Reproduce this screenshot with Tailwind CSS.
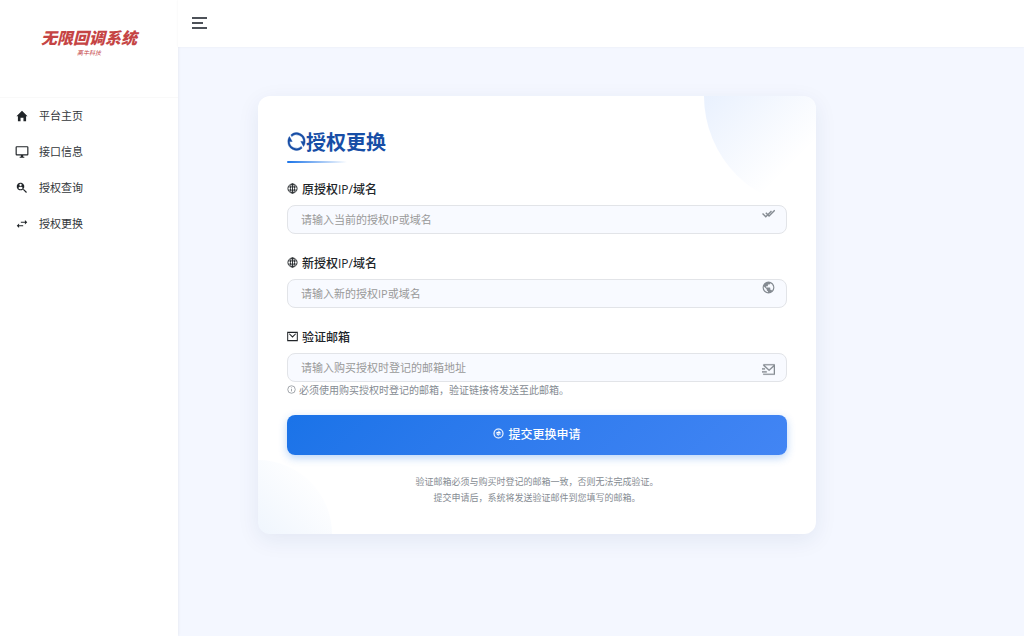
<!DOCTYPE html>
<html lang="zh-CN">
  <head>
    <meta charset="UTF-8" />
    <meta name="viewport" content="width=device-width, initial-scale=1.0" />
    <title>授权更换</title>
    <script src="https://cdn.jsdelivr.net/npm/@tailwindcss/browser@4"></script>
  </head>
  <body class="flex min-h-screen bg-[#f4f7ff] font-['Open_Sans','Noto_Sans_CJK_SC',sans-serif] text-[#212529]">
    <!-- Sidebar -->
    <aside class="w-[178px] shrink-0 bg-white shadow-[0_0_3px_rgba(0,0,0,0.08)]">
      <a href="#" class="flex h-[98px] flex-col items-center border-b border-[#f9f9f9] pt-[26px] text-[#c54444]">
        <span class="text-[16px] leading-6 font-black italic">无限回调系统</span>
        <span class="text-[6px] leading-[7px] italic">高牛科技</span>
      </a>
      <nav class="text-[11px] text-[#33373b]">
        <a href="#" class="flex h-9 items-center gap-[10px] pl-[15px]">
          <svg class="size-[14px]" viewBox="0 0 24 24" fill="#212529"><path d="M9.500 21v-6h5v6H19v-8.500h2.500L12 3l-9.500 9.500H5V21z" /></svg>
          <span>平台主页</span>
        </a>
        <a href="#" class="flex h-9 items-center gap-[10px] pl-[15px]">
          <svg class="size-[14px]" viewBox="0 0 24 24" fill="#212529"><path d="M21 2H3a2 2 0 0 0-2 2v12a2 2 0 0 0 2 2h7v2H8v2h8v-2h-2v-2h7a2 2 0 0 0 2-2V4a2 2 0 0 0-2-2zm0 14H3V4h18v12z" /></svg>
          <span>接口信息</span>
        </a>
        <a href="#" class="flex h-9 items-center gap-[10px] pl-[15px]">
          <svg class="size-[14px]" viewBox="0 0 24 24" fill="#212529"><path d="M15.500 14l5 5-1.500 1.500-5-5v-.8l-.3-.3A6.500 6.500 0 1 1 14.400 13.700l.3.3h.8zM9.500 4.500a2 2 0 1 0 0 4 2 2 0 0 0 0-4zm0 5.500c-1.600 0-3 .8-3.800 2a4.600 4.600 0 0 0 7.600 0c-.8-1.200-2.200-2-3.800-2z" /></svg>
          <span>授权查询</span>
        </a>
        <a href="#" class="flex h-9 items-center gap-[10px] pl-[15px]">
          <svg class="size-[14px]" viewBox="0 0 24 24" fill="#212529"><path d="M21 9l-4-4v3h-7v2h7v3l4-4zM7 11l-4 4 4 4v-3h7v-2H7v-3z" /></svg>
          <span>授权更换</span>
        </a>
      </nav>
    </aside>

    <div class="min-w-0 flex-1">
      <!-- Top bar -->
      <header class="flex h-[47px] items-center bg-white pl-[14px] shadow-[0_0_2px_rgba(0,0,0,0.06)]">
        <button type="button" aria-label="菜单" class="mb-px flex flex-col gap-[3px]">
          <span class="h-[2px] w-[15px] bg-[#4d5259]"></span>
          <span class="h-[2px] w-[11px] bg-[#4d5259]"></span>
          <span class="h-[2px] w-[15px] bg-[#4d5259]"></span>
        </button>
      </header>

      <main class="px-20 pt-[49px] pb-20">
        <!-- Card -->
        <section class="relative w-full max-w-[558px] rounded-xl bg-white shadow-[0_6px_22px_rgba(30,50,100,0.08)]">
          <div class="pointer-events-none absolute inset-0 overflow-hidden rounded-xl">
            <div class="absolute -top-28 -right-28 size-56 rounded-full bg-linear-135 from-[#4285f4]/20 from-0% to-[#4285f4]/0 to-60%"></div>
            <div class="absolute -bottom-[74px] -left-[74px] size-[148px] rounded-full bg-linear-45 from-[#1a73e8]/15 to-[#1a73e8]/0 to-90%"></div>
          </div>

          <form class="relative px-[29px] pt-8 pb-7">
            <h1 class="flex items-center text-[20px] leading-[30px] font-bold text-[#174ea6]">
              <svg class="mb-1 size-[19px]" viewBox="1 1 22 22" fill="currentColor" stroke="currentColor" stroke-width="0.500"><path d="M5.460 4.260A10 10 0 0 1 22 12c0 2.140-.67 4.120-1.810 5.740L17 12h3A8 8 0 0 0 6.460 6.230zM18.540 19.740A10 10 0 0 1 2 12c0-2.140.67-4.120 1.810-5.740L7 12H4a8 8 0 0 0 13.540 5.770z" /></svg>
              授权更换
            </h1>
            <div class="mt-[3px] h-[2px] w-[60px] rounded-full bg-linear-to-r from-[#1a73e8] to-[#1a73e8]/0"></div>

            <div class="mt-[17px]">
              <label for="oldHost" class="flex items-center gap-1 text-[12px] leading-5 font-medium">
                <svg class="mb-[3px] size-[11px]" viewBox="0 0 24 24" fill="none" stroke="currentColor" stroke-width="2"><circle cx="12" cy="12" r="10" /><ellipse cx="12" cy="12" rx="4.500" ry="10" /><path d="M3 8.500h18M3 15.500h18M12 2v20" /></svg>
                原授权IP/域名
              </label>
              <div class="relative mt-[5px]">
                <input id="oldHost" type="text" placeholder="请输入当前的授权IP或域名" class="block h-[29px] w-full rounded-lg border border-[#e2e4e8] bg-[#f8faff] pr-10 pl-[13px] text-[11px] placeholder:text-[#999]" />
                <svg class="absolute top-[2px] right-3 size-[13px] text-[#858b92]" viewBox="0 0 24 24" fill="none" stroke="currentColor" stroke-width="2.500"><path d="M1 12l6 6L17.500 7.500M7 10.500l6 6L23.500 6" /></svg>
              </div>
            </div>

            <div class="mt-5">
              <label for="newHost" class="flex items-center gap-1 text-[12px] leading-5 font-medium">
                <svg class="mb-[3px] size-[11px]" viewBox="0 0 24 24" fill="none" stroke="currentColor" stroke-width="2"><circle cx="12" cy="12" r="10" /><ellipse cx="12" cy="12" rx="4.500" ry="10" /><path d="M3 8.500h18M3 15.500h18M12 2v20" /></svg>
                新授权IP/域名
              </label>
              <div class="relative mt-[5px]">
                <input id="newHost" type="text" placeholder="请输入新的授权IP或域名" class="block h-[29px] w-full rounded-lg border border-[#e2e4e8] bg-[#f8faff] pr-10 pl-[13px] text-[11px] placeholder:text-[#999]" />
                <svg class="absolute top-[2px] right-3 size-[13px] text-[#858b92]" viewBox="1 1 22 22" fill="currentColor"><path d="M12 2a10 10 0 1 0 0 20 10 10 0 0 0 0-20zm-1 17.900A8 8 0 0 1 4.200 10.200L9 15v1a2 2 0 0 0 2 2v1.900zm6.900-2.500a2 2 0 0 0-1.900-1.400h-1v-3a1 1 0 0 0-1-1H8v-2h2a1 1 0 0 0 1-1V7h2a2 2 0 0 0 2-2v-.4a8 8 0 0 1 2.900 12.800z" /></svg>
              </div>
            </div>

            <div class="mt-5">
              <label for="email" class="flex items-center gap-1 text-[12px] leading-5 font-medium">
                <svg class="mb-[3px] size-[11px]" viewBox="0 0 24 24" fill="none" stroke="currentColor" stroke-width="2.200"><path d="M1.500 3h21v18h-21zM5 6l7 7 7-7" /></svg>
                验证邮箱
              </label>
              <div class="relative mt-[5px]">
                <input id="email" type="email" placeholder="请输入购买授权时登记的邮箱地址" class="block h-[29px] w-full rounded-lg border border-[#e2e4e8] bg-[#f8faff] pr-10 pl-[13px] text-[11px] placeholder:text-[#999]" />
                <svg class="absolute top-[10px] right-3 size-[13px] text-[#858b92]" viewBox="0 1 22 22" fill="currentColor" stroke="currentColor" stroke-width="0.300"><path d="M22 20a1 1 0 0 1-1 1H3a1 1 0 0 1-1-1v-1h18V7.300l-8 7.200-10-9V4a1 1 0 0 1 1-1h18a1 1 0 0 1 1 1zM4.430 5L12 11.810 19.570 5zM0 15h8v2H0zM0 10h5v2H0z" /></svg>
              </div>
              <p class="flex items-center gap-[3px] text-[10px] leading-4 text-[#858b92]">
                <svg class="mb-[2px] size-[9px] shrink-0" viewBox="0 0 24 24" fill="none" stroke="currentColor" stroke-width="2"><circle cx="12" cy="12" r="10" /><path d="M12 10.500V17M12 6.500v2" /></svg>
                必须使用购买授权时登记的邮箱，验证链接将发送至此邮箱。
              </p>
            </div>

            <button type="submit" class="mt-[17px] flex h-10 w-full items-center justify-center gap-1 rounded-lg bg-linear-135 from-[#1a73e8] to-[#4285f4] text-[12px] font-medium text-white shadow-[0_3px_9px_rgba(26,115,232,0.3)]">
              <svg class="mb-[3px] size-[11px]" viewBox="1 1 22 22" fill="currentColor" stroke="currentColor" stroke-width="0.300"><path d="M12 22a10 10 0 1 1 0-20 10 10 0 0 1 0 20zm0-2a8 8 0 1 0 0-16 8 8 0 0 0 0 16zm-5-8h9v2h-4v3zm5-3V6l5 5H8V9z" /></svg>
              提交更换申请
            </button>

            <p class="mt-[19px] text-center text-[9px] leading-4 text-[#858b92]">
              验证邮箱必须与购买时登记的邮箱一致，否则无法完成验证。<br />
              提交申请后，系统将发送验证邮件到您填写的邮箱。
            </p>
          </form>
        </section>
      </main>
    </div>
  </body>
</html>
